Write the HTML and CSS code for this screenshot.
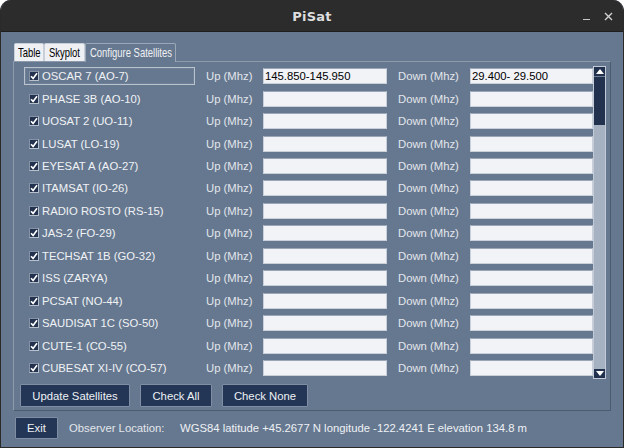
FILE: index.html
```html
<!DOCTYPE html>
<html>
<head>
<meta charset="utf-8">
<link rel="stylesheet" href="styles.css">
</head>
<body>
<div class="window">
  <div class="titlebar">
    <span class="title">PiSat</span>
    <span class="wbtn minimize"></span>
    <span class="wbtn close">
      <svg width="9" height="9" viewBox="0 0 9 9"><path d="M1 1L8 8M8 1L1 8" stroke="#d0d0d0" stroke-width="1.4"/></svg>
    </span>
  </div>
  <div class="content">
    <div class="tabs">
      <div class="tab t-table"><span>Table</span></div>
      <div class="tab t-sky"><span>Skyplot</span></div>
      <div class="tab t-conf active"><span>Configure Satellites</span></div>
    </div>
    <div class="pane">
      <div class="listarea">
        <div class="rows" id="rows"></div>
        <div class="scrollbar">
          <div class="sbtn"><svg width="8" height="5" viewBox="0 0 8 5"><path d="M0 5L4 0L8 5Z" fill="#fff"/></svg></div>
          <div class="thumb"></div>
          <div class="track"></div>
          <div class="sbtn"><svg width="8" height="5" viewBox="0 0 8 5"><path d="M0 0L4 5L8 0Z" fill="#fff"/></svg></div>
        </div>
      </div>
      <div class="actions">
        <button class="btn b-update">Update Satellites</button>
        <button class="btn b-all">Check All</button>
        <button class="btn b-none">Check None</button>
      </div>
    </div>
    <div class="footer">
      <button class="btn exit">Exit</button>
      <span class="obs-label">Observer Location:</span>
      <span class="obs-value">WGS84 latitude +45.2677 N longitude -122.4241 E elevation 134.8 m</span>
    </div>
  </div>
</div>
<script src="app.js"></script>
</body>
</html>
```

FILE: app.js
```js
const sats = [
  ["OSCAR 7 (AO-7)", "145.850-145.950", "29.400- 29.500"],
  ["PHASE 3B (AO-10)", "", ""],
  ["UOSAT 2 (UO-11)", "", ""],
  ["LUSAT (LO-19)", "", ""],
  ["EYESAT A (AO-27)", "", ""],
  ["ITAMSAT (IO-26)", "", ""],
  ["RADIO ROSTO (RS-15)", "", ""],
  ["JAS-2 (FO-29)", "", ""],
  ["TECHSAT 1B (GO-32)", "", ""],
  ["ISS (ZARYA)", "", ""],
  ["PCSAT (NO-44)", "", ""],
  ["SAUDISAT 1C (SO-50)", "", ""],
  ["CUTE-1 (CO-55)", "", ""],
  ["CUBESAT XI-IV (CO-57)", "", ""]
];
const rows = document.getElementById("rows");
const check = '<svg width="8" height="8" viewBox="0 0 8 8"><path d="M1 4.2L3.1 6.4L7 1.2" fill="none" stroke="#fff" stroke-width="1.6"/></svg>';
sats.forEach((s, i) => {
  const row = document.createElement("div");
  row.className = "row";
  row.innerHTML =
    '<div class="name' + (i === 0 ? ' focus' : '') + '"><span class="cb">' + check + '</span><span class="nm"></span></div>' +
    '<span class="lbl up">Up (Mhz)</span><div class="field f-up"></div>' +
    '<span class="lbl down">Down (Mhz)</span><div class="field f-down"></div>';
  row.querySelector(".nm").textContent = s[0];
  const f = row.querySelectorAll(".field");
  f[0].textContent = s[1];
  f[1].textContent = s[2];
  rows.appendChild(row);
});
```

FILE: styles.css
```css
* { box-sizing: border-box; }
html, body { margin: 0; padding: 0; background: #ffffff; }
body { width: 624px; height: 448px; overflow: hidden; font-family: "Liberation Sans", Arial, sans-serif; }

.window {
  width: 624px;
  height: 448px;
  border-radius: 11px 11px 0 0;
  overflow: hidden;
  background: #66788f;
  border: 1px solid #2a2a2a;
  border-top: none;
  display: flex;
  flex-direction: column;
}

.titlebar {
  height: 32px;
  flex: none;
  background: #2c2c2c;
  display: flex;
  align-items: center;
  justify-content: center;
  position: relative;
  border-bottom: 1px solid #1e1e1e;
}
.title {
  color: #dedede;
  font-family: "DejaVu Sans", sans-serif;
  font-weight: bold;
  font-size: 13px;
  letter-spacing: 0.2px;
  margin-top: 1px;
}
.wbtn { position: absolute; top: 0; }
.minimize { left: 582px; top: 19px; width: 7px; height: 1px; background: #c8c8c8; }
.close { left: 603px; top: 12px; width: 9px; height: 9px; display: flex; }

.content {
  flex: 1;
  padding: 10px 11px 0 12px;
  display: flex;
  flex-direction: column;
}

.tabs { display: flex; align-items: flex-end; height: 19px; margin-left: 1px; }
.tab {
  height: 18px;
  background: #eef0f4;
  color: #000;
  font-size: 13.5px;
  line-height: 17px;
  border: 1px solid #c8cfd8;
  border-bottom: none;
  border-radius: 2px 2px 0 0;
  white-space: nowrap;
}
.tab span { display: inline-block; transform: scaleX(0.7); transform-origin: 0 0; }
.t-table { width: 30px; padding-left: 3px; }
.t-sky { width: 41px; padding-left: 4px; }
.t-conf { width: 91px; padding-left: 4px; }
.tab.active {
  height: 19px;
  background: #66788f;
  color: #f0f2f5;
  border-color: #9aa8b8;
  position: relative;
  top: 1px;
}

.pane {
  width: 598px;
  height: 350px;
  border: 1px solid;
  border-color: #8c9aab #4c5b6d #4c5b6d #8c9aab;
  padding: 3px 0 0 10px;
}

.listarea { display: flex; height: 315px; }
.rows { width: 569px; }
.row {
  height: 22.46px;
  display: flex;
  align-items: center;
}
.name {
  width: 171px;
  height: 18px;
  display: flex;
  align-items: center;
  padding-left: 4px;
  border: 1px solid transparent;
  flex: none;
}
.name.focus { border-color: #b9c2cd; box-shadow: inset 0 0 0 1px #6f8198; }
.cb {
  width: 10px;
  height: 10px;
  background: #22324e;
  border: 1px solid #b7c0cb;
  border-top-color: #8592a3;
  border-left-color: #8592a3;
  display: flex;
  align-items: center;
  justify-content: center;
  margin-right: 3px;
  flex: none;
}
.nm, .lbl, .obs-label, .obs-value {
  font-size: 11.3px;
  white-space: nowrap;
}
.nm { color: #f0f2f5; }
.lbl { color: #e2e6ec; flex: none; margin-left: 11px; }
.lbl.up { width: 57px; }
.lbl.down { width: 72px; }
.field {
  height: 16px;
  flex: none;
  background: #f1f3f7;
  border: 1px solid #c9d0d9;
  border-top-color: #9aa6b5;
  color: #000;
  font-size: 11.3px;
  line-height: 14px;
  padding-left: 1px;
  white-space: nowrap;
  overflow: hidden;
}
.f-up { width: 124px; }
.f-down { width: 123px; }

.scrollbar {
  width: 13px;
  height: 313px;
  margin-top: 1px;
  display: flex;
  flex-direction: column;
  background: #a6b2c1;
  border: 1px solid #c3ccd6;
}
.sbtn {
  height: 9px;
  flex: none;
  background: #22324e;
  display: flex;
  align-items: center;
  justify-content: center;
}
.thumb { height: 49px; flex: none; background: #22324e; border-top: 1px solid #6f7f94; }
.track { flex: 1; }

.actions { display: flex; gap: 10px; margin: 4px 0 0 -4px; }
.btn {
  height: 23px;
  background: #243655;
  color: #eef1f5;
  border: 1px solid #7f8ea2;
  border-radius: 1px;
  font-family: "Liberation Sans", Arial, sans-serif;
  font-size: 11.3px;
  padding: 0;
  line-height: 20px;
}
.b-update { width: 110px; }
.b-all { width: 72px; }
.b-none { width: 86px; }

.footer { display: flex; align-items: center; height: 22px; margin-top: 6px; margin-left: 2px; }
.exit { width: 43px; height: 22px; }
.obs-label { color: #e2e6ec; margin-left: 11px; width: 111px; }
.obs-value { color: #eef1f5; }
```
